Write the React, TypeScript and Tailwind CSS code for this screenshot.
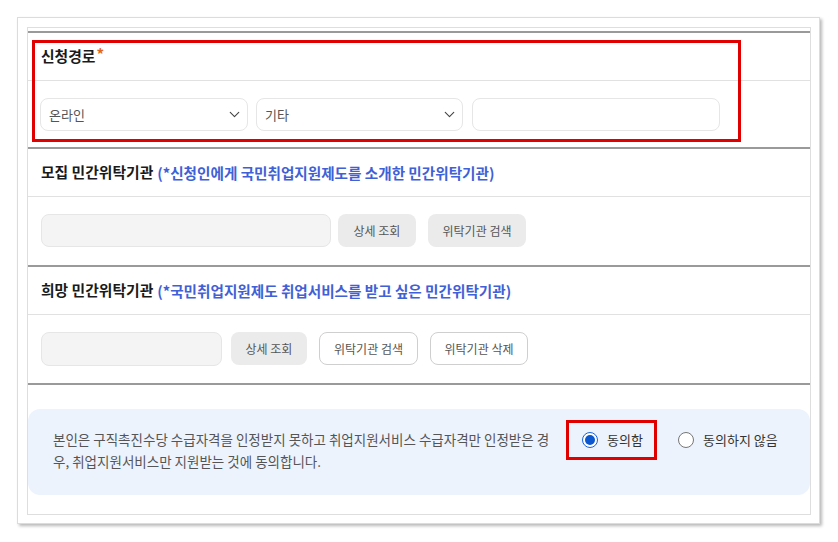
import { ChevronDown } from 'lucide-react';

const FONT = '"Noto Sans CJK KR", "Noto Sans", sans-serif';

function SectionHeader({ title, note, required }: { title: string; note?: string; required?: boolean }) {
  return (
    <div className="h-[48px] flex items-center px-[13px] border-b border-[#e1e1e1]">
      <span className="text-[14.8px] font-bold text-[#1a1a1a]">{title}</span>
      {required && <span className="text-[15px] font-bold text-[#e0661c] self-start mt-[10px] ml-[1px]">*</span>}
      {note && <span className="text-[14.6px] font-bold text-[#4060d6] ml-[4px]">{note}</span>}
    </div>
  );
}

function Select({ value, width }: { value: string; width: string }) {
  return (
    <div className={`${width} h-[33px] flex items-center justify-between pl-[8px] pr-[4px] bg-white border border-[#e6e6e6] rounded-[8px]`}>
      <span className="text-[13px] text-[#555]">{value}</span>
      <ChevronDown size={17} strokeWidth={1.6} className="text-[#444]" />
    </div>
  );
}

function GrayButton({ label, width }: { label: string; width: string }) {
  return (
    <button className={`${width} h-[33px] rounded-[8px] bg-[#ebebeb] text-[12px] text-[#555]`}>{label}</button>
  );
}

function LineButton({ label, width }: { label: string; width: string }) {
  return (
    <button className={`${width} h-[33px] rounded-[8px] bg-white border border-[#cfcfcf] text-[12px] text-[#555]`}>{label}</button>
  );
}

function Radio({ checked }: { checked?: boolean }) {
  if (checked) {
    return (
      <span className="w-[16px] h-[16px] rounded-full border border-[#1a62d6] flex items-center justify-center bg-white">
        <span className="w-[10px] h-[10px] rounded-full bg-[#0b57d0]" />
      </span>
    );
  }
  return <span className="w-[16px] h-[16px] rounded-full border border-[#767676] bg-white" />;
}

export default function App() {
  return (
    <div className="w-[838px] h-[542px] bg-white pt-[17px] pl-[17px]" style={{ fontFamily: FONT }}>
      <div className="w-[803px] h-[507px] border border-[#dcdcdc] bg-white p-[9px] shadow-[2px_2px_3px_rgba(0,0,0,0.28)]">
        <div className="relative w-[784px] h-[488px] border border-[#dedede] pt-[3px]">
          {/* 신청경로 */}
          <div className="border-t-2 border-[#9a9a9a]">
            <SectionHeader title="신청경로" required />
            <div className="h-[66px] flex items-start gap-[8px] pt-[17px] px-[12px]">
              <Select value="온라인" width="w-[208px]" />
              <Select value="기타" width="w-[207px]" />
              <div className="w-[248px] h-[33px] ml-[1px] bg-white border border-[#e6e6e6] rounded-[8px]" />
            </div>
          </div>

          {/* 모집 민간위탁기관 */}
          <div className="border-t-2 border-[#9a9a9a]">
            <SectionHeader title="모집 민간위탁기관" note="(*신청인에게 국민취업지원제도를 소개한 민간위탁기관)" />
            <div className="h-[68px] flex items-start pt-[17px] px-[13px]">
              <div className="w-[290px] h-[33px] bg-[#f4f4f4] border border-[#e6e6e6] rounded-[8px]" />
              <div className="ml-[7px] flex gap-[12px]">
                <GrayButton label="상세 조회" width="w-[78px]" />
                <GrayButton label="위탁기관 검색" width="w-[98px]" />
              </div>
            </div>
          </div>

          {/* 희망 민간위탁기관 */}
          <div className="border-t-2 border-[#9a9a9a]">
            <SectionHeader title="희망 민간위탁기관" note="(*국민취업지원제도 취업서비스를 받고 싶은 민간위탁기관)" />
            <div className="h-[68px] flex items-start pt-[17px] px-[13px]">
              <div className="w-[181px] h-[34px] bg-[#f4f4f4] border border-[#e6e6e6] rounded-[8px]" />
              <div className="ml-[9px] flex gap-[12px]">
                <GrayButton label="상세 조회" width="w-[76px]" />
                <LineButton label="위탁기관 검색" width="w-[99px]" />
                <LineButton label="위탁기관 삭제" width="w-[98px]" />
              </div>
            </div>
          </div>

          {/* 동의 */}
          <div className="border-t-2 border-[#9a9a9a] pt-[24px]">
            <div className="h-[86px] rounded-[12px] bg-[#edf3fd] flex items-start pl-[25px] pt-[19px]">
              <p className="w-[500px] text-[13.5px] leading-[22px] text-[#555] break-all">
                본인은 구직촉진수당 수급자격을 인정받지 못하고 취업지원서비스 수급자격만 인정받은 경우, 취업지원서비스만 지원받는 것에 동의합니다.
              </p>
              <div className="ml-[13px] mt-[-8px] flex items-center">
                <label className="flex items-center gap-[9px] h-[40px] w-[91px] pl-[13px] border-[3px] border-[#e00000]">
                  <Radio checked />
                  <span className="text-[13px] text-[#333]">동의함</span>
                </label>
                <label className="ml-[21px] flex items-center gap-[9px]">
                  <Radio />
                  <span className="text-[13px] text-[#333]">동의하지 않음</span>
                </label>
              </div>
            </div>
          </div>

          {/* 신청경로 강조 표시 */}
          <div className="absolute left-[4px] top-[12px] w-[709px] h-[102px] border-[3px] border-[#e00000] pointer-events-none" />
        </div>
      </div>
    </div>
  );
}
